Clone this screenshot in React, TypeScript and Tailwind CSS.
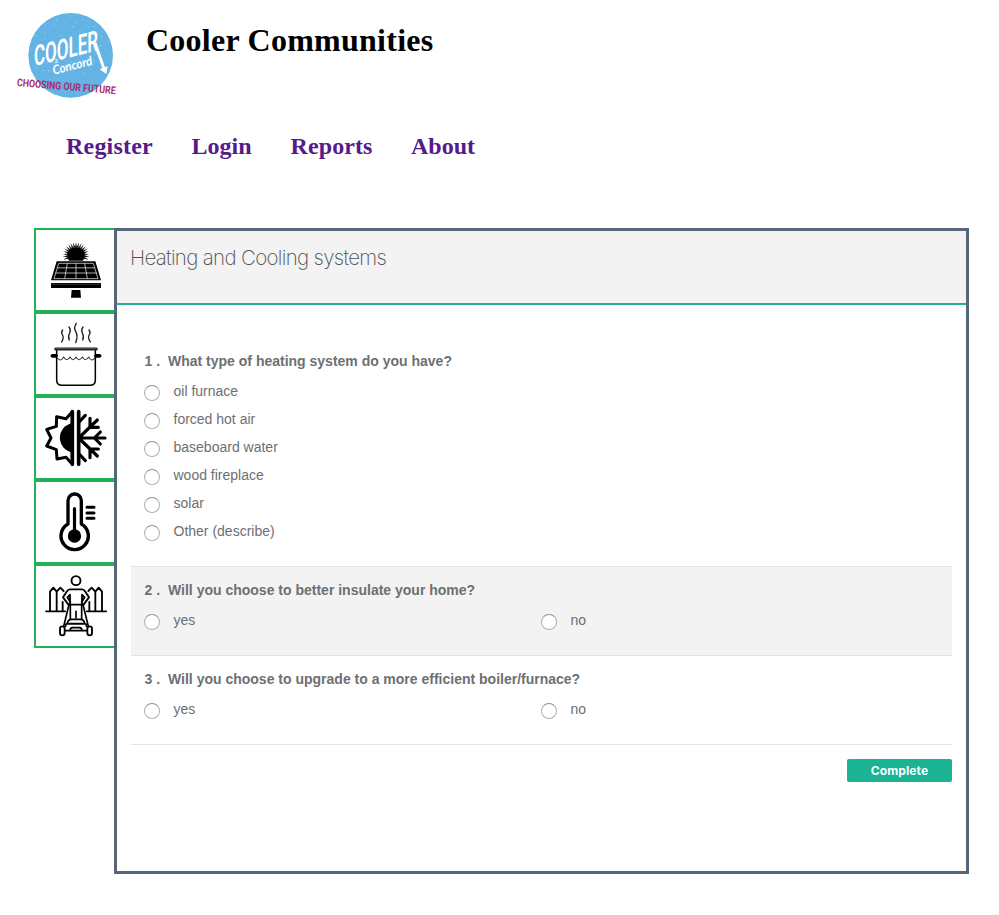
import React from "react";

const Tile = ({ children, label }: { children: React.ReactNode; label: string }) => (
  <button aria-label={label} className="block h-[84px] w-20 border-2 border-r-0 border-[#22b058] bg-white">
    <svg className="block h-20 w-[78px]" viewBox="18 18 234 240" fill="none" stroke="#000" strokeLinecap="round" strokeLinejoin="round">
      {children}
    </svg>
  </button>
);

const rays = Array.from({ length: 19 }, (_, i) => {
  const a = (Math.PI * (-18 + i * 12)) / 180;
  const at = (r: number, d: number) => `${138 - r * Math.cos(a + d)} ${94 - r * Math.sin(a + d)}`;
  return `M${at(25, -0.1)}L${at(40, 0)}L${at(25, 0.1)}Z`;
}).join("");

const SolarIcon = () => (
  <>
    <path d="M117 110A26 26 0 1 1 159 110Z" fill="#000" stroke="none" />
    <path d={rays} fill="#000" stroke="none" />
    <path d="M80 112H196L213 169H63Z" fill="#000" stroke="none" />
    <path d="M86 118H190L204 164H72Z M81 131.500H195M77 147H200M112 118L104 164M138 118V164M164 118L172 164" stroke="#fff" strokeWidth="2" strokeLinecap="butt" />
    <path d="M63 177H213V192H63Z" fill="#000" stroke="none" />
    <path d="M63 180.500H213" stroke="#666" strokeWidth="1.500" strokeLinecap="butt" />
    <path d="M125 198H151L153 221H123Z" fill="#000" stroke="none" />
  </>
);

const PotIcon = () => (
  <>
    <path d="M77 123H199" stroke="#222" strokeWidth="9" />
    <path d="M78 121.500H198" stroke="#777" strokeWidth="1.500" />
    <path d="M80 128V216Q80 232 96 232H180Q196 232 196 216V128" strokeWidth="4.500" />
    <path d="M67 143.500H78M198 143.500H209" strokeWidth="11" />
    <path d="M82 150Q92 163 101 147Q110 163 120 147Q129 163 138 147Q147 163 157 147Q166 163 176 147Q185 163 194 150" strokeWidth="3.200" stroke="#333" />
    <path d="M98 66Q92 73 97 80Q103 88 95 102M117 57Q124 66 119 75Q113 85 118 96M139 46Q130 59 137 70Q145 84 137 104M159 57Q152 66 157 75Q163 85 158 96M177 66Q183 73 178 80Q172 88 181 102" strokeWidth="4" stroke="#222" />
  </>
);

const HeatCoolIcon = () => (
  <>
    <path d="M127 94A44 44 0 0 0 127 181Z" fill="#000" stroke="none" />
    <path d="M127 59L108 80L80 74L79 103L50 112L63 138L50 162L79 173L81 201L108 196L127 217Z" strokeWidth="9" />
    <path d="M127 59V217M146 59V217" strokeWidth="11" />
    <path d="M146 138H225M211 120L193 138L211 156M146 138L202 84M180 79V106H205M146 138L202 192M180 197V171H205M146 91L166 70M146 185L166 206" strokeWidth="9.500" />
  </>
);

const ThermometerIcon = () => (
  <>
    <path d="M114 144V74A20 20 0 0 1 154 74V144A41 41 0 1 1 114 144Z" strokeWidth="10" />
    <circle cx="133.500" cy="180" r="20" fill="#000" stroke="none" />
    <path d="M133.500 98V180" strokeWidth="9.500" />
    <path d="M171 94H192M171 111H192M171 127H192" strokeWidth="9" />
  </>
);

const MowerIcon = () => (
  <>
    <circle cx="138" cy="62" r="13.500" strokeWidth="5.500" />
    <path d="M48 154H106M170 154H229" strokeWidth="5" />
    <path d="M60 153V95L70 83L80 95V153M80 95L91 83L101 93M98 126V153M216 153V95L206 83L196 95V153M196 95L185 83L175 93M178 126V153" strokeWidth="5.500" />
    <path d="M120 88H156Q162 88 165 94L177 112L159 136M120 88Q114 88 111 94L99 112L117 136" strokeWidth="5.500" />
    <path d="M120 104L112 112L121 126M156 104L164 112L155 126M120 104V134M156 104V134M118 134H158" strokeWidth="5.500" />
    <path d="M121 136V176M155 136V176M138 154V174" strokeWidth="5" />
    <path d="M116 138L101 199M160 138L175 199" strokeWidth="5" />
    <path d="M112 191Q113 178 125 178H151Q163 178 164 191ZM107 199V192H169V199M106 212H170M120 211Q121 203 128 203H148Q155 203 156 211" strokeWidth="5" />
    <rect x="90" y="199" width="14" height="27" rx="7" strokeWidth="5.500" />
    <rect x="172" y="199" width="14" height="27" rx="7" strokeWidth="5.500" />
  </>
);

const specks = Array.from({ length: 150 }, (_, i) => {
  const a = i * 2.39996;
  const r = 124 * Math.sqrt(((i * 37) % 150) / 150);
  return { x: 212 + r * Math.cos(a), y: 166 + r * Math.sin(a), r: 0.7 + ((i * 7) % 5) * 0.3 };
});

const Logo = () => (
  <svg className="block h-[110px] w-[140px] shrink-0" viewBox="0 0 420 330">
    <circle cx="212" cy="166" r="127" fill="#63b3e4" />
    {specks.map((s, i) => (
      <circle key={i} cx={s.x} cy={s.y} r={s.r} fill="#fff" opacity="0.4" />
    ))}
    <g fill="#fff">
      <text transform="translate(102 199) skewY(-14)" fontFamily="Roboto, sans-serif" fontWeight="600" fontSize="86" textLength="192" lengthAdjust="spacingAndGlyphs">COOLER</text>
      <text x="164" y="189" fontFamily="Roboto, sans-serif" fontWeight="700" fontSize="16">2</text>
      <text transform="translate(161 224) rotate(-14)" fontFamily="Lato, sans-serif" fontStyle="italic" fontWeight="700" fontSize="38" textLength="122" lengthAdjust="spacingAndGlyphs">Concord</text>
      <path d="M280 130L289 127L315 202L323 199L319 222L299 208L307 205Z" />
    </g>
    <text transform="translate(50 258) rotate(4.700)" fill="#a92c70" fontFamily="Roboto, sans-serif" fontWeight="700" fontSize="32" textLength="297" lengthAdjust="spacingAndGlyphs">CHOOSING OUR FUTURE</text>
  </svg>
);

const Option = ({ name, label }: { name: string; label: string }) => (
  <label className="flex h-7 items-center">
    <input type="radio" name={name} className="mt-[3px] mr-[13.500px] size-4 shrink-0 appearance-none rounded-full border border-[#b0b0b0] border-t-[#929292] bg-white" />
    <span>{label}</span>
  </label>
);

const Question = ({ n, text, options, columns, shaded }: { n: number; text: string; options: string[]; columns?: boolean; shaded?: boolean }) => (
  <fieldset className={`border-b border-[#e4e4e4] pt-[13px] pb-[21px] pl-[13px] ${shaded ? "bg-[#f3f3f3]" : "bg-white"}`}>
    <h3 className="flex h-[26px] items-start leading-5 font-bold">
      <span className="w-6 pl-[0.500px] whitespace-pre">{n} .</span>
      <span>{text}</span>
    </h3>
    <div className={columns ? "grid grid-cols-[397px_1fr]" : ""}>
      {options.map((o) => (
        <Option key={o} name={`q${n}`} label={o} />
      ))}
    </div>
  </fieldset>
);

export default function App() {
  return (
    <div className="h-[915px] w-[999px] overflow-hidden bg-white">
      <header className="flex h-[110px] font-['Liberation_Serif',serif]">
        <Logo />
        <h1 className="pt-[22px] pl-[6px] text-[32px] leading-9 font-bold tracking-[0.250px] text-black">Cooler Communities</h1>
      </header>
      <nav className="flex h-[118px] pt-[21px] pl-[66px] font-['Liberation_Serif',serif] text-2xl leading-[30px] font-bold text-[#551a8b]">
        <a className="w-[125.500px] tracking-[0.200px]">Register</a>
        <a className="w-[99px]">Login</a>
        <a className="w-[120.500px] tracking-[0.100px]">Reports</a>
        <a>About</a>
      </nav>
      <main className="flex pl-[34px]">
        <aside className="w-20">
          <Tile label="Solar"><SolarIcon /></Tile>
          <Tile label="Cooking"><PotIcon /></Tile>
          <Tile label="Heating and cooling"><HeatCoolIcon /></Tile>
          <Tile label="Temperature"><ThermometerIcon /></Tile>
          <Tile label="Lawn"><MowerIcon /></Tile>
        </aside>
        <section className="h-[646px] w-[855px] border-[3px] border-[#566878] font-['Liberation_Sans',Arial,sans-serif] text-sm text-[#6d7072]">
          <div className="h-[74px] border-b-2 border-[#26ae94] bg-[#f3f3f3] pt-3 pl-[13px]">
            <h2 className="font-[Inter,sans-serif] text-[20.500px] leading-[30px] font-extralight tracking-[-0.680px] text-[#4c4f51]">Heating and Cooling systems</h2>
          </div>
          <form className="px-3.5 pt-[33px]">
            <Question n={1} text="What type of heating system do you have?" options={["oil furnace", "forced hot air", "baseboard water", "wood fireplace", "solar", "Other (describe)"]} />
            <Question n={2} text="Will you choose to better insulate your home?" options={["yes", "no"]} columns shaded />
            <Question n={3} text="Will you choose to upgrade to a more efficient boiler/furnace?" options={["yes", "no"]} columns />
            <div className="flex justify-end pt-3.5">
              <button type="button" className="h-[23px] w-[105px] rounded-xs bg-[#1ab394] font-[Inter,sans-serif] text-xs font-bold tracking-[0.100px] text-white">Complete</button>
            </div>
          </form>
        </section>
      </main>
    </div>
  );
}
